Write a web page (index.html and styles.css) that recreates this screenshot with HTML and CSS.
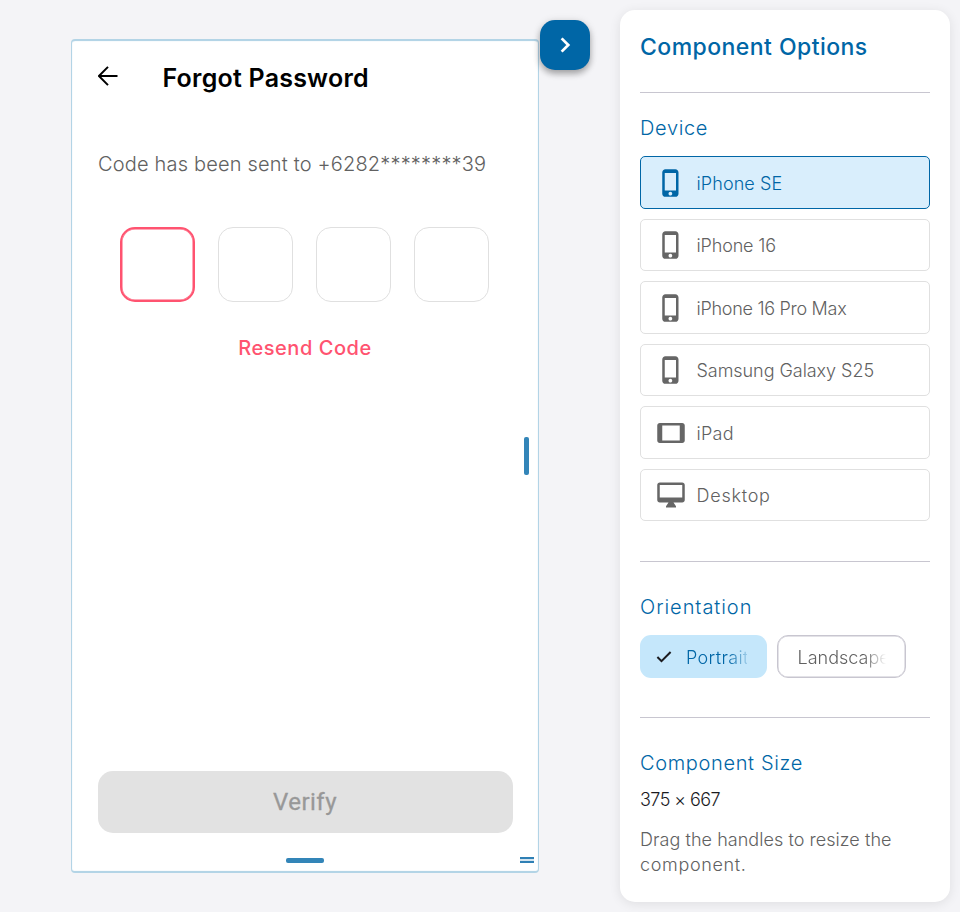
FILE: index.html
```
<!DOCTYPE html>
<html lang="en">
<head>
<meta charset="utf-8">
<title>Component Preview</title>
<link rel="stylesheet" href="styles.css">
</head>
<body>
<svg width="0" height="0" class="sprite">
  <symbol id="phone" viewBox="0 0 24 24"><path d="M15.500 1h-8C6.120 1 5 2.120 5 3.500v17C5 21.880 6.120 23 7.500 23h8c1.380 0 2.500-1.120 2.500-2.500v-17C18 2.120 16.880 1 15.500 1zm-4 21c-.83 0-1.500-.67-1.500-1.500s.67-1.500 1.500-1.500 1.500.67 1.500 1.500-.67 1.500-1.500 1.500zm4.500-4H7V4h9v14z"/></symbol>
</svg>
<main class="stage">
  <section class="device">
    <header class="bar">
      <svg class="back" viewBox="0 0 20 20"><path d="M19.500 10H1.200M10 .9L.9 10l9.100 9.100" fill="none" stroke="#000" stroke-width="2"/></svg>
      <h1><span class="t-title">Forgot Password</span></h1>
    </header>
    <p class="sent"><span class="t-sent">Code has been sent to +6282********39</span></p>
    <div class="otp"><i class="active"></i><i></i><i></i><i></i></div>
    <p class="resend"><span class="t-resend">Resend Code</span></p>
    <button class="verify">Verify</button>
    <b class="handle-x"></b>
    <b class="handle-y"></b>
    <b class="handle-c"></b>
  </section>
  <button class="toggle" aria-label="Toggle panel"><svg viewBox="0 0 24 24"><path d="M9.300 6.700l5.300 5.300-5.300 5.300" fill="none" stroke="#fff" stroke-width="2.200"/></svg></button>
</main>
<aside class="panel">
  <h2><span class="t-options">Component Options</span></h2>
  <section class="group devices">
    <h3><span class="t-device">Device</span></h3>
    <ul>
      <li class="on"><svg viewBox="0 0 24 24"><use href="#phone"/></svg><span class="t-se">iPhone SE</span></li>
      <li><svg viewBox="0 0 24 24"><use href="#phone"/></svg><span class="t-16">iPhone 16</span></li>
      <li><svg viewBox="0 0 24 24"><use href="#phone"/></svg><span class="t-max">iPhone 16 Pro Max</span></li>
      <li><svg viewBox="0 0 24 24"><use href="#phone"/></svg><span class="t-s25">Samsung Galaxy S25</span></li>
      <li><svg viewBox="0 0 24 24"><path d="M21 4H3c-1.100 0-2 .9-2 2v12c0 1.100.9 2 2 2h18c1.100 0 2-.9 2-2V6c0-1.100-.9-2-2-2zm-2 14H5V6h14v12z"/></svg><span class="t-ipad">iPad</span></li>
      <li><svg viewBox="0 0 24 24"><path d="M21 2H3c-1.100 0-2 .9-2 2v12c0 1.100.9 2 2 2h7l-2 3v1h8v-1l-2-3h7c1.100 0 2-.9 2-2V4c0-1.100-.9-2-2-2zm0 12H3V4h18v10z"/></svg><span class="t-desk">Desktop</span></li>
    </ul>
  </section>
  <section class="group orient">
    <h3><span class="t-orient">Orientation</span></h3>
    <div class="chips">
      <div class="chip picked"><svg viewBox="0 0 16 12"><path d="M1.400 6l4.100 4.100L14.600 1" fill="none" stroke="#1b1b1f" stroke-width="2"/></svg><span class="t-port">Portrait</span></div>
      <div class="chip"><span class="t-land">Landscape</span></div>
    </div>
  </section>
  <section class="group size">
    <h3><span class="t-size">Component Size</span></h3>
    <p class="dims"><span class="t-dims">375 × 667</span></p>
    <p class="hint"><span class="t-hint1">Drag the handles to resize the</span><br><span class="t-hint2">component.</span></p>
  </section>
</aside>
</body>
</html>
```
FILE: styles.css
```
* { box-sizing: border-box; margin: 0; padding: 0; }
body { width: 960px; height: 912px; display: flex; overflow: hidden; background: #f4f4f7; font-family: Inter, sans-serif; color: #616161; }
.sprite { position: absolute; }
h1, h2, h3 { font-weight: 300; }
h3, h2 { color: #0066a6; }
ul { list-style: none; }
button { border: 0; font: inherit; }
span { white-space: nowrap; }

.stage { position: relative; width: 620px; padding: 39px 0 0 71px; }
.device { position: relative; display: flex; flex-direction: column; width: 468px; height: 834px; padding: 0 25.500px; background: #fff; border: solid #b3d4e6; border-width: 2px 1px; border-radius: 4px; box-shadow: inset 0 0 1px #b3d4e6; }
.bar { display: flex; align-items: center; height: 74px; }
.back { width: 20px; height: 20px; margin-top: -5px; }
.bar h1 { margin-left: 45px; font-size: 25px; font-weight: 600; line-height: 30px; color: #000; }
.sent { margin-top: 34px; padding-left: .5px; font-size: 20px; font-weight: 300; line-height: 30px; }
.otp { display: flex; gap: 23px; margin: 48px 0 0 22.900px; }
.otp i { width: 75px; height: 75px; border: 1px solid #e0e0e0; border-radius: 15px; }
.otp .active { border: 2px solid #ff5370; box-shadow: inset 0 0 0 .5px #ff5370; }
.resend { margin-top: 31px; text-align: center; font-size: 20px; font-weight: 500; line-height: 30px; color: #ff5370; }
.verify { margin-top: auto; margin-bottom: 38px; height: 62px; flex-shrink: 0; border-radius: 15px; background: #e2e2e2; color: #989898; font: 400 24px/63px Roboto, sans-serif; letter-spacing: .5px; -webkit-text-stroke: .3px #989898; }
.handle-x { position: absolute; right: 9px; top: 396px; width: 5px; height: 38px; border-radius: 2px; background: #3385b8; }
.handle-y { position: absolute; left: 214px; bottom: 8px; width: 38px; height: 5px; border-radius: 2px; background: #3385b8; }
.handle-c { position: absolute; right: 4px; bottom: 8px; width: 14px; height: 6px; border: solid #2f80b5; border-width: 2px 0; background: #d5e5f0; }
.toggle { position: absolute; left: 540px; top: 20px; width: 50px; height: 50px; border-radius: 15px; background: #0066a6; box-shadow: 0 4px 6px rgba(0,0,0,.28), 0 1px 8px rgba(0,0,0,.12); }
.toggle svg { display: block; width: 30px; height: 30px; margin: 10px; }

.panel { width: 330px; height: 892px; margin-top: 10px; padding: 0 20px; background: #fff; border-radius: 15px; box-shadow: 0 2px 12px rgba(0,0,0,.09); }
.panel h2 { height: 82px; padding-top: 22px; font-size: 23px; font-weight: 500; line-height: 31px; }
.group { border-top: 1px solid #c8c6d0; }
.group h3 { font-size: 20px; line-height: 28px; }
.devices { height: 469px; padding-top: 21px; }
.devices ul { display: grid; gap: 10px; margin-top: 14px; }
.devices li { display: flex; align-items: center; gap: 10.500px; height: 52.500px; padding-left: 15px; border: 1px solid #e0e0e0; border-radius: 5px; font-size: 18px; font-weight: 300; }
.devices li svg { width: 30px; height: 30px; margin-top: 1px; fill: #666; }
.devices li span { padding-top: 2px; }
.devices .on { background: #d9eefc; border-color: #0066a6; color: #0066a6; }
.devices .on svg { fill: #0066a6; }
.orient { height: 156px; padding-top: 31px; }
.chips { display: flex; gap: 10px; margin-top: 14px; }
.chip { display: flex; align-items: center; width: 129px; height: 43px; padding-left: 20px; border: 1px solid #c8c6d0; border-radius: 11px; box-shadow: inset 0 0 0 .5px #c8c6d0; font-size: 18px; font-weight: 300; }
.chip span { width: 88px; padding-top: 1px; overflow: hidden; mask-image: linear-gradient(to right, #000 66px, transparent 88px); }
.picked { width: 126.500px; padding-left: 16px; border: 0; box-shadow: none; background: #c5e7fb; color: #0066a6; }
.picked svg { width: 16px; height: 12px; margin-right: 14px; }
.picked span { width: 61px; mask-image: linear-gradient(to right, #000 42px, transparent 66px); }
.size { padding-top: 31px; }
.dims { margin-top: 10px; font-size: 18px; font-weight: 300; line-height: 25px; color: #1b1b1f; }
.hint { margin-top: 15px; font-size: 18px; font-weight: 300; line-height: 25px; }

/* per-label tracking */
.t-title { letter-spacing: .22px; }
.t-sent { letter-spacing: .18px; }
.t-resend { letter-spacing: .55px; }
.t-options { letter-spacing: .45px; }
.t-device { letter-spacing: .65px; }
.t-se { letter-spacing: .1px; }
.t-16 { letter-spacing: -.15px; }
.t-max { letter-spacing: -.28px; }
.t-s25 { letter-spacing: -.05px; }
.t-ipad { letter-spacing: .3px; }
.t-desk { letter-spacing: .75px; }
.t-orient { letter-spacing: .95px; }
.t-port { letter-spacing: .35px; }
.t-size { letter-spacing: .65px; }
.t-dims { letter-spacing: -.55px; }
.t-hint1 { letter-spacing: .05px; }
.t-hint2 { letter-spacing: .65px; }
```
